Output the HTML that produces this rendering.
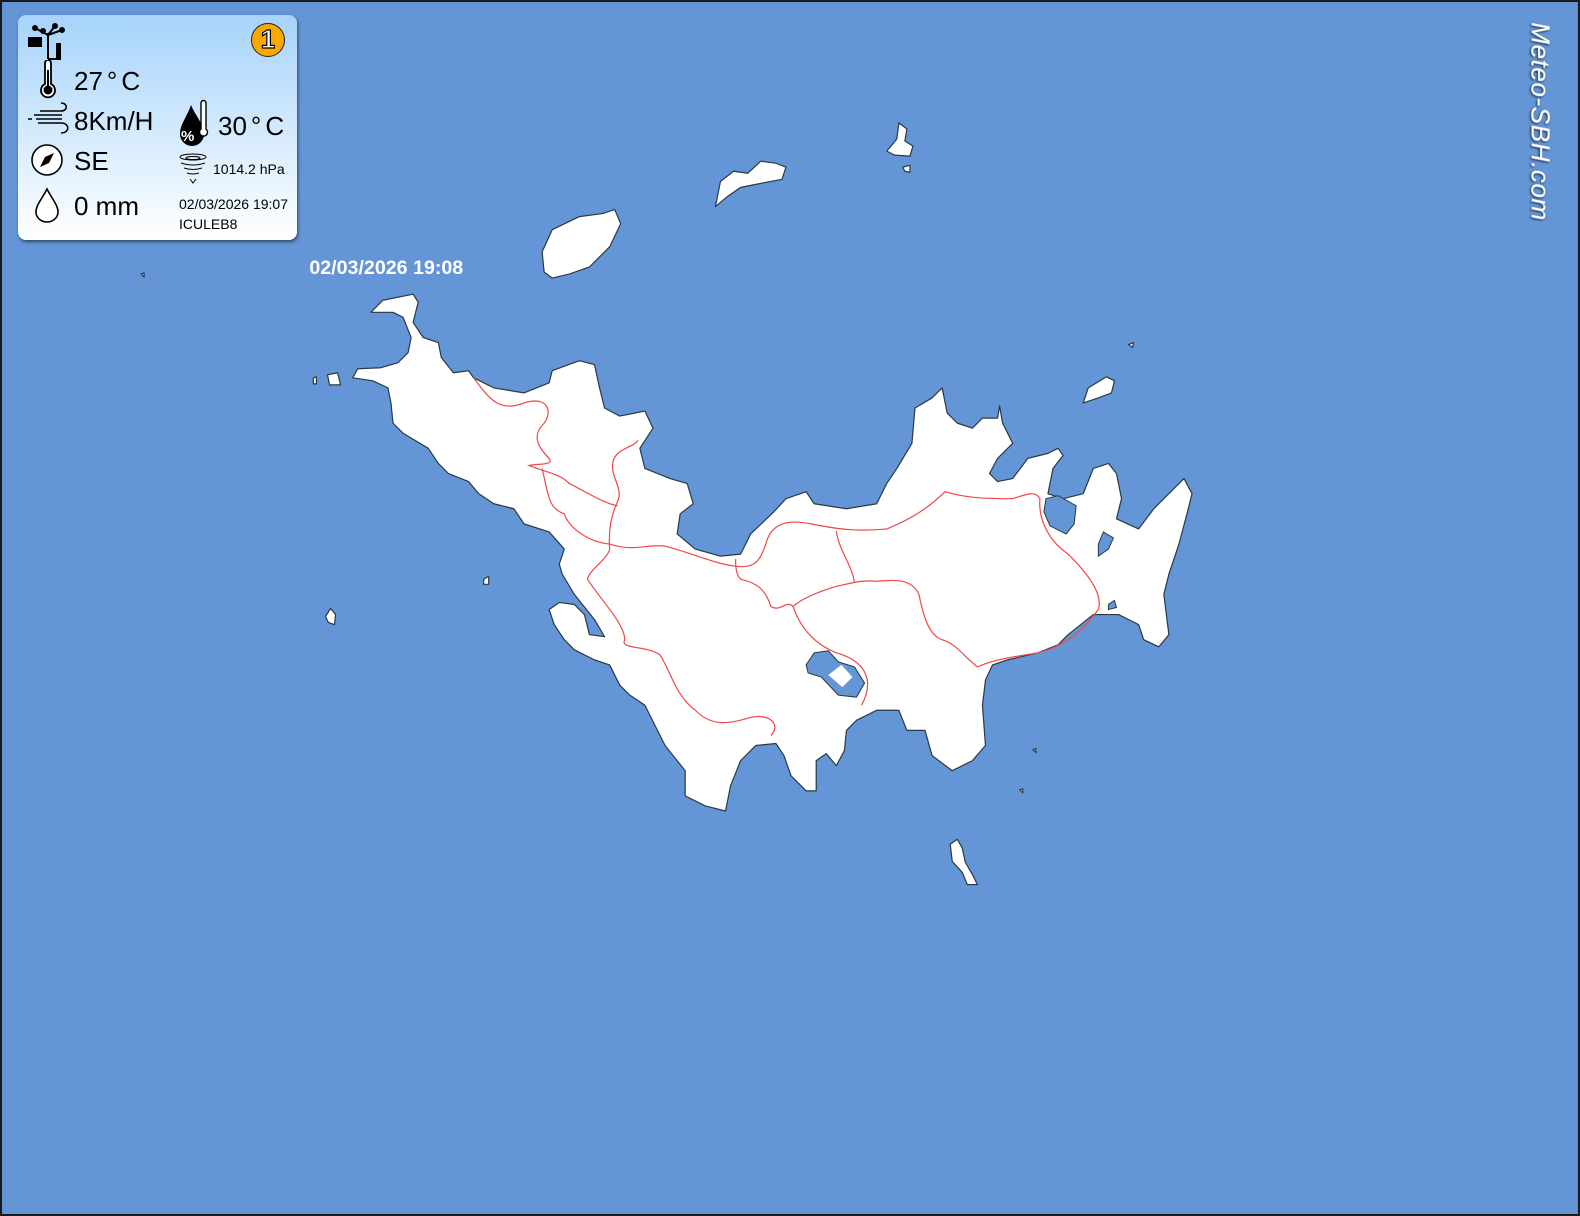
<!DOCTYPE html>
<html><head><meta charset="utf-8"><style>
html,body{margin:0;padding:0;width:1580px;height:1216px;overflow:hidden;background:#1a1a1a;font-family:"Liberation Sans",sans-serif}
#map{position:absolute;left:0;top:0;width:1580px;height:1216px}
#panel{position:absolute;left:18px;top:15px;width:279px;height:225px;border-radius:8px;background:linear-gradient(#a6d3fb,#ffffff);box-shadow:1px 2px 3px rgba(0,0,0,.5)}
.t{position:absolute;color:#000;white-space:nowrap}
.big{font-size:26px}
.deg{margin:0 4px}
</style></head><body>
<svg id="map" viewBox="0 0 1568 1207" preserveAspectRatio="none">
<defs><filter id="sh" x="-20%" y="-20%" width="140%" height="140%"><feDropShadow dx="1" dy="1" stdDeviation="1.2" flood-color="#000" flood-opacity="0.8"/></filter></defs>
<rect x="0" y="0" width="1568" height="1207" fill="#1a1a1a"/>
<rect x="2" y="2" width="1564" height="1203" fill="#6495d6"/>
<g fill="#fff" stroke="#2a3a44" stroke-width="1.2" stroke-linejoin="round">
<path d="M368,310 L380,298 L410,292 L415,300 L410,320 L420,335 L435,340 L438,355 L450,370 L465,368 L470,375 L490,385 L520,390 L545,380 L548,368 L575,358 L590,362 L595,385 L600,405 L615,413 L640,408 L648,425 L635,445 L640,465 L665,475 L682,480 L688,500 L675,510 L672,530 L690,545 L715,552 L735,550 L745,530 L768,508 L780,495 L800,488 L808,500 L840,505 L870,500 L880,480 L890,465 L905,440 L908,405 L925,395 L935,385 L940,410 L950,420 L965,425 L975,415 L990,415 L992,403 L995,420 L1000,430 L1005,440 L990,455 L982,470 L990,478 L1005,475 L1020,455 L1040,450 L1050,445 L1055,452 L1045,465 L1040,490 L1055,495 L1075,490 L1085,465 L1100,460 L1108,470 L1113,495 L1108,515 L1130,525 L1145,505 L1160,490 L1175,475 L1183,490 L1178,510 L1170,540 L1160,570 L1155,590 L1160,630 L1150,642 L1135,635 L1130,620 L1110,610 L1085,610 L1060,630 L1050,640 L1030,648 L1000,655 L985,660 L978,675 L975,700 L978,740 L965,755 L945,765 L925,750 L918,725 L900,725 L892,705 L870,705 L850,715 L840,725 L838,745 L830,760 L820,748 L810,755 L810,785 L800,785 L785,770 L778,750 L770,738 L750,740 L735,755 L725,780 L720,805 L700,800 L690,795 L680,790 L680,765 L668,750 L660,740 L650,720 L640,700 L625,690 L615,680 L605,660 L590,655 L570,645 L560,635 L550,620 L545,605 L555,598 L570,600 L580,610 L585,630 L600,632 L590,615 L570,590 L558,570 L555,560 L560,545 L545,528 L520,520 L510,505 L490,500 L475,490 L465,478 L445,470 L435,460 L425,445 L400,430 L390,420 L388,400 L385,385 L370,378 L350,375 L355,366 L378,365 L395,360 L405,350 L408,335 L400,315 L390,310 Z"/>
<path d="M540,270 L538,250 L548,228 L575,215 L598,212 L610,208 L616,222 L605,245 L585,265 L565,272 L548,276 Z"/>
<path d="M710,205 L715,180 L728,170 L742,172 L755,160 L770,162 L780,166 L776,178 L755,182 L735,186 L722,195 Z"/>
<path d="M880,150 L890,138 L892,122 L900,128 L898,140 L906,145 L903,155 L888,154 Z"/>
<path d="M896,166 L903,164 L903,171 L898,170 Z"/>
<path d="M1075,400 L1080,385 L1098,374 L1106,378 L1103,390 L1090,395 Z"/>
<path d="M943,838 L950,833 L955,842 L958,856 L965,868 L970,878 L960,878 L955,866 L945,855 Z"/>
<path d="M323,612 L328,604 L333,610 L332,620 L326,618 Z"/>
<path d="M325,372 L335,370 L338,382 L327,382 Z"/>
<path d="M311,375 L314,374 L314,381 L311,381 Z"/>
<path d="M480,575 L485,572 L485,580 L480,580 Z"/>
<path d="M1120,342 L1125,340 L1124,345 Z"/>
<path d="M1025,744 L1028,743 L1028,747 Z"/>
<path d="M1012,784 L1015,783 L1015,787 Z"/>
<path d="M140,272 L143,271 L143,275 Z"/>
</g>
<g fill="#6495d6" stroke="#2a3a44" stroke-width="1">
<path d="M800,660 L808,648 L822,646 L832,657 L848,662 L858,678 L850,692 L832,690 L815,672 L802,668 Z"/>
<path d="M1038,495 L1050,492 L1068,502 L1066,520 L1058,530 L1042,522 L1036,508 Z"/>
<path d="M1090,540 L1095,528 L1105,534 L1100,545 L1090,552 Z"/>
<path d="M1100,600 L1106,596 L1108,603 L1100,605 Z"/>
</g>
<path d="M822,670 L835,660 L846,672 L836,682 Z" fill="#fff"/>
<g fill="none" stroke="#f04848" stroke-width="1.2">
<path d="M470,375 C485,395 495,410 520,400 C545,392 548,410 540,420 C530,430 530,440 545,455 C550,462 535,460 525,462 C545,470 555,470 565,480 C585,490 600,500 613,502"/>
<path d="M633,437 C628,445 610,445 608,460 C606,475 620,485 612,500 C605,515 604,530 605,545 C603,555 585,565 583,575 C600,600 620,620 620,635 C615,645 640,640 655,650 C665,665 670,690 690,705 C705,720 720,720 745,712 C765,708 775,720 765,730"/>
<path d="M538,465 C545,495 545,505 560,510 C565,525 585,538 605,540 C630,548 640,540 660,542 C690,550 710,560 730,562 C750,565 755,555 760,540 C765,520 780,515 805,520 C830,525 850,528 880,525 C905,515 920,505 938,488 C960,495 985,495 1005,495 C1020,490 1028,487 1032,495 C1030,520 1045,540 1060,550 C1080,570 1095,590 1090,605 C1075,625 1060,640 1030,648 C1005,652 985,655 970,662 C955,650 950,640 935,635 C920,630 915,605 912,590 C905,575 890,575 870,577 C855,575 840,580 830,582 C810,588 795,595 787,602 C780,595 775,608 765,602 C760,585 750,578 735,575 C730,570 730,560 730,555"/>
<path d="M830,527 C832,545 845,560 848,578"/>
<path d="M787,602 C795,625 810,640 830,648 C855,655 870,672 855,700"/>
</g>
<text x="307" y="272" font-family="Liberation Sans" font-weight="bold" font-size="19.5" fill="#fff">02/03/2026 19:08</text>
<text transform="translate(1520,22) rotate(90)" font-family="Liberation Sans" font-style="italic" font-size="26" fill="#fff" filter="url(#sh)" letter-spacing="0.5">Meteo-SBH.com</text>
</svg>

<div id="panel">
  <svg style="position:absolute;left:10px;top:8px" width="40" height="40" viewBox="0 0 40 40">
    <g fill="#000" stroke="#000" stroke-width="2">
      <circle cx="7" cy="5" r="2"/><circle cx="15" cy="8" r="2"/><circle cx="27" cy="3" r="2"/><circle cx="34" cy="7" r="2"/>
      <line x1="7" y1="5" x2="20" y2="12"/><line x1="27" y1="3" x2="20" y2="12"/><line x1="34" y1="7" x2="20" y2="12"/>
      <line x1="20" y1="10" x2="20" y2="36"/><line x1="20" y1="36" x2="28" y2="36"/>
    </g>
    <rect x="0" y="14" width="14" height="10" fill="#000"/>
    <rect x="28" y="20" width="5" height="17" fill="#000"/>
  </svg>
  <div style="position:absolute;left:233px;top:8px;width:34px;height:34px;border-radius:50%;background:#f9a800;border:1.5px solid #222;box-sizing:border-box;text-align:center;line-height:31px;font-size:26px;color:#fff;-webkit-text-stroke:1.2px #000;font-weight:bold">1</div>
  <svg style="position:absolute;left:20px;top:45px" width="20" height="40" viewBox="0 0 20 40">
    <path d="M7,3 a3,3 0 0 1 6,0 V24 a7,7 0 1 1 -6,0 Z" fill="#fff" stroke="#000" stroke-width="1.8"/>
    <circle cx="10" cy="30" r="4.5" fill="#000"/><rect x="9" y="10" width="2" height="18" fill="#000"/>
  </svg>
  <div class="t big" style="left:56px;top:51px">27<span class="deg">°</span>C</div>
  <svg style="position:absolute;left:10px;top:86px" width="42" height="34" viewBox="0 0 42 34">
    <g fill="none" stroke="#000" stroke-width="1.5">
      <path d="M12,10 H33 C40,10 40,2 33,2"/><path d="M6,14 H34"/><path d="M0,18 H4 M8,18 H34"/><path d="M10,22 H33 C42,22 42,32 33,32"/>
    </g>
  </svg>
  <div class="t big" style="left:56px;top:91px">8Km/H</div>
  <svg style="position:absolute;left:12px;top:128px" width="34" height="34" viewBox="0 0 34 34">
    <circle cx="17" cy="17" r="15" fill="#fff" stroke="#000" stroke-width="1.6"/>
    <path d="M24,10 L19,20 L10,24 L15,14 Z" fill="#000"/>
  </svg>
  <div class="t big" style="left:56px;top:131px">SE</div>
  <svg style="position:absolute;left:16px;top:172px" width="26" height="36" viewBox="0 0 26 36">
    <path d="M13,2 C8,12 2,18 2,25 A11,10 0 0 0 24,25 C24,18 18,12 13,2 Z" fill="#fff" stroke="#000" stroke-width="1.6"/>
  </svg>
  <div class="t big" style="left:56px;top:176px">0 mm</div>
  <svg style="position:absolute;left:160px;top:84px" width="32" height="50" viewBox="0 0 32 50">
    <path d="M13,6 C9,18 2,25 2,35 A12,12 0 0 0 26,35 C26,25 18,18 13,6 Z" fill="#000"/>
    <path d="M23,4 a2.5,2.5 0 0 1 5,0 V30 a4,4 0 1 1 -5,0 Z" fill="#fff" stroke="#000" stroke-width="1.4"/>
    <text x="3" y="42" font-family="Liberation Sans" font-weight="bold" font-size="15" fill="#fff">%</text>
  </svg>
  <div class="t big" style="left:200px;top:96px">30<span class="deg">°</span>C</div>
  <svg style="position:absolute;left:160px;top:138px" width="30" height="32" viewBox="0 0 30 32">
    <g fill="none" stroke="#000" stroke-width="1">
      <ellipse cx="15" cy="4" rx="13" ry="3"/><ellipse cx="15" cy="5" rx="7" ry="1.5"/>
      <path d="M3,10 Q15,14 27,10"/><path d="M6,15 Q15,18 24,15"/><path d="M9,20 Q15,22 21,20"/><path d="M12,26 L15,30 L18,26"/>
    </g>
  </svg>
  <div class="t" style="left:195px;top:146px;font-size:14px">1014.2 hPa</div>
  <div class="t" style="left:161px;top:181px;font-size:14px">02/03/2026 19:07</div>
  <div class="t" style="left:161px;top:201px;font-size:14px">ICULEB8</div>
</div>
</body></html>
